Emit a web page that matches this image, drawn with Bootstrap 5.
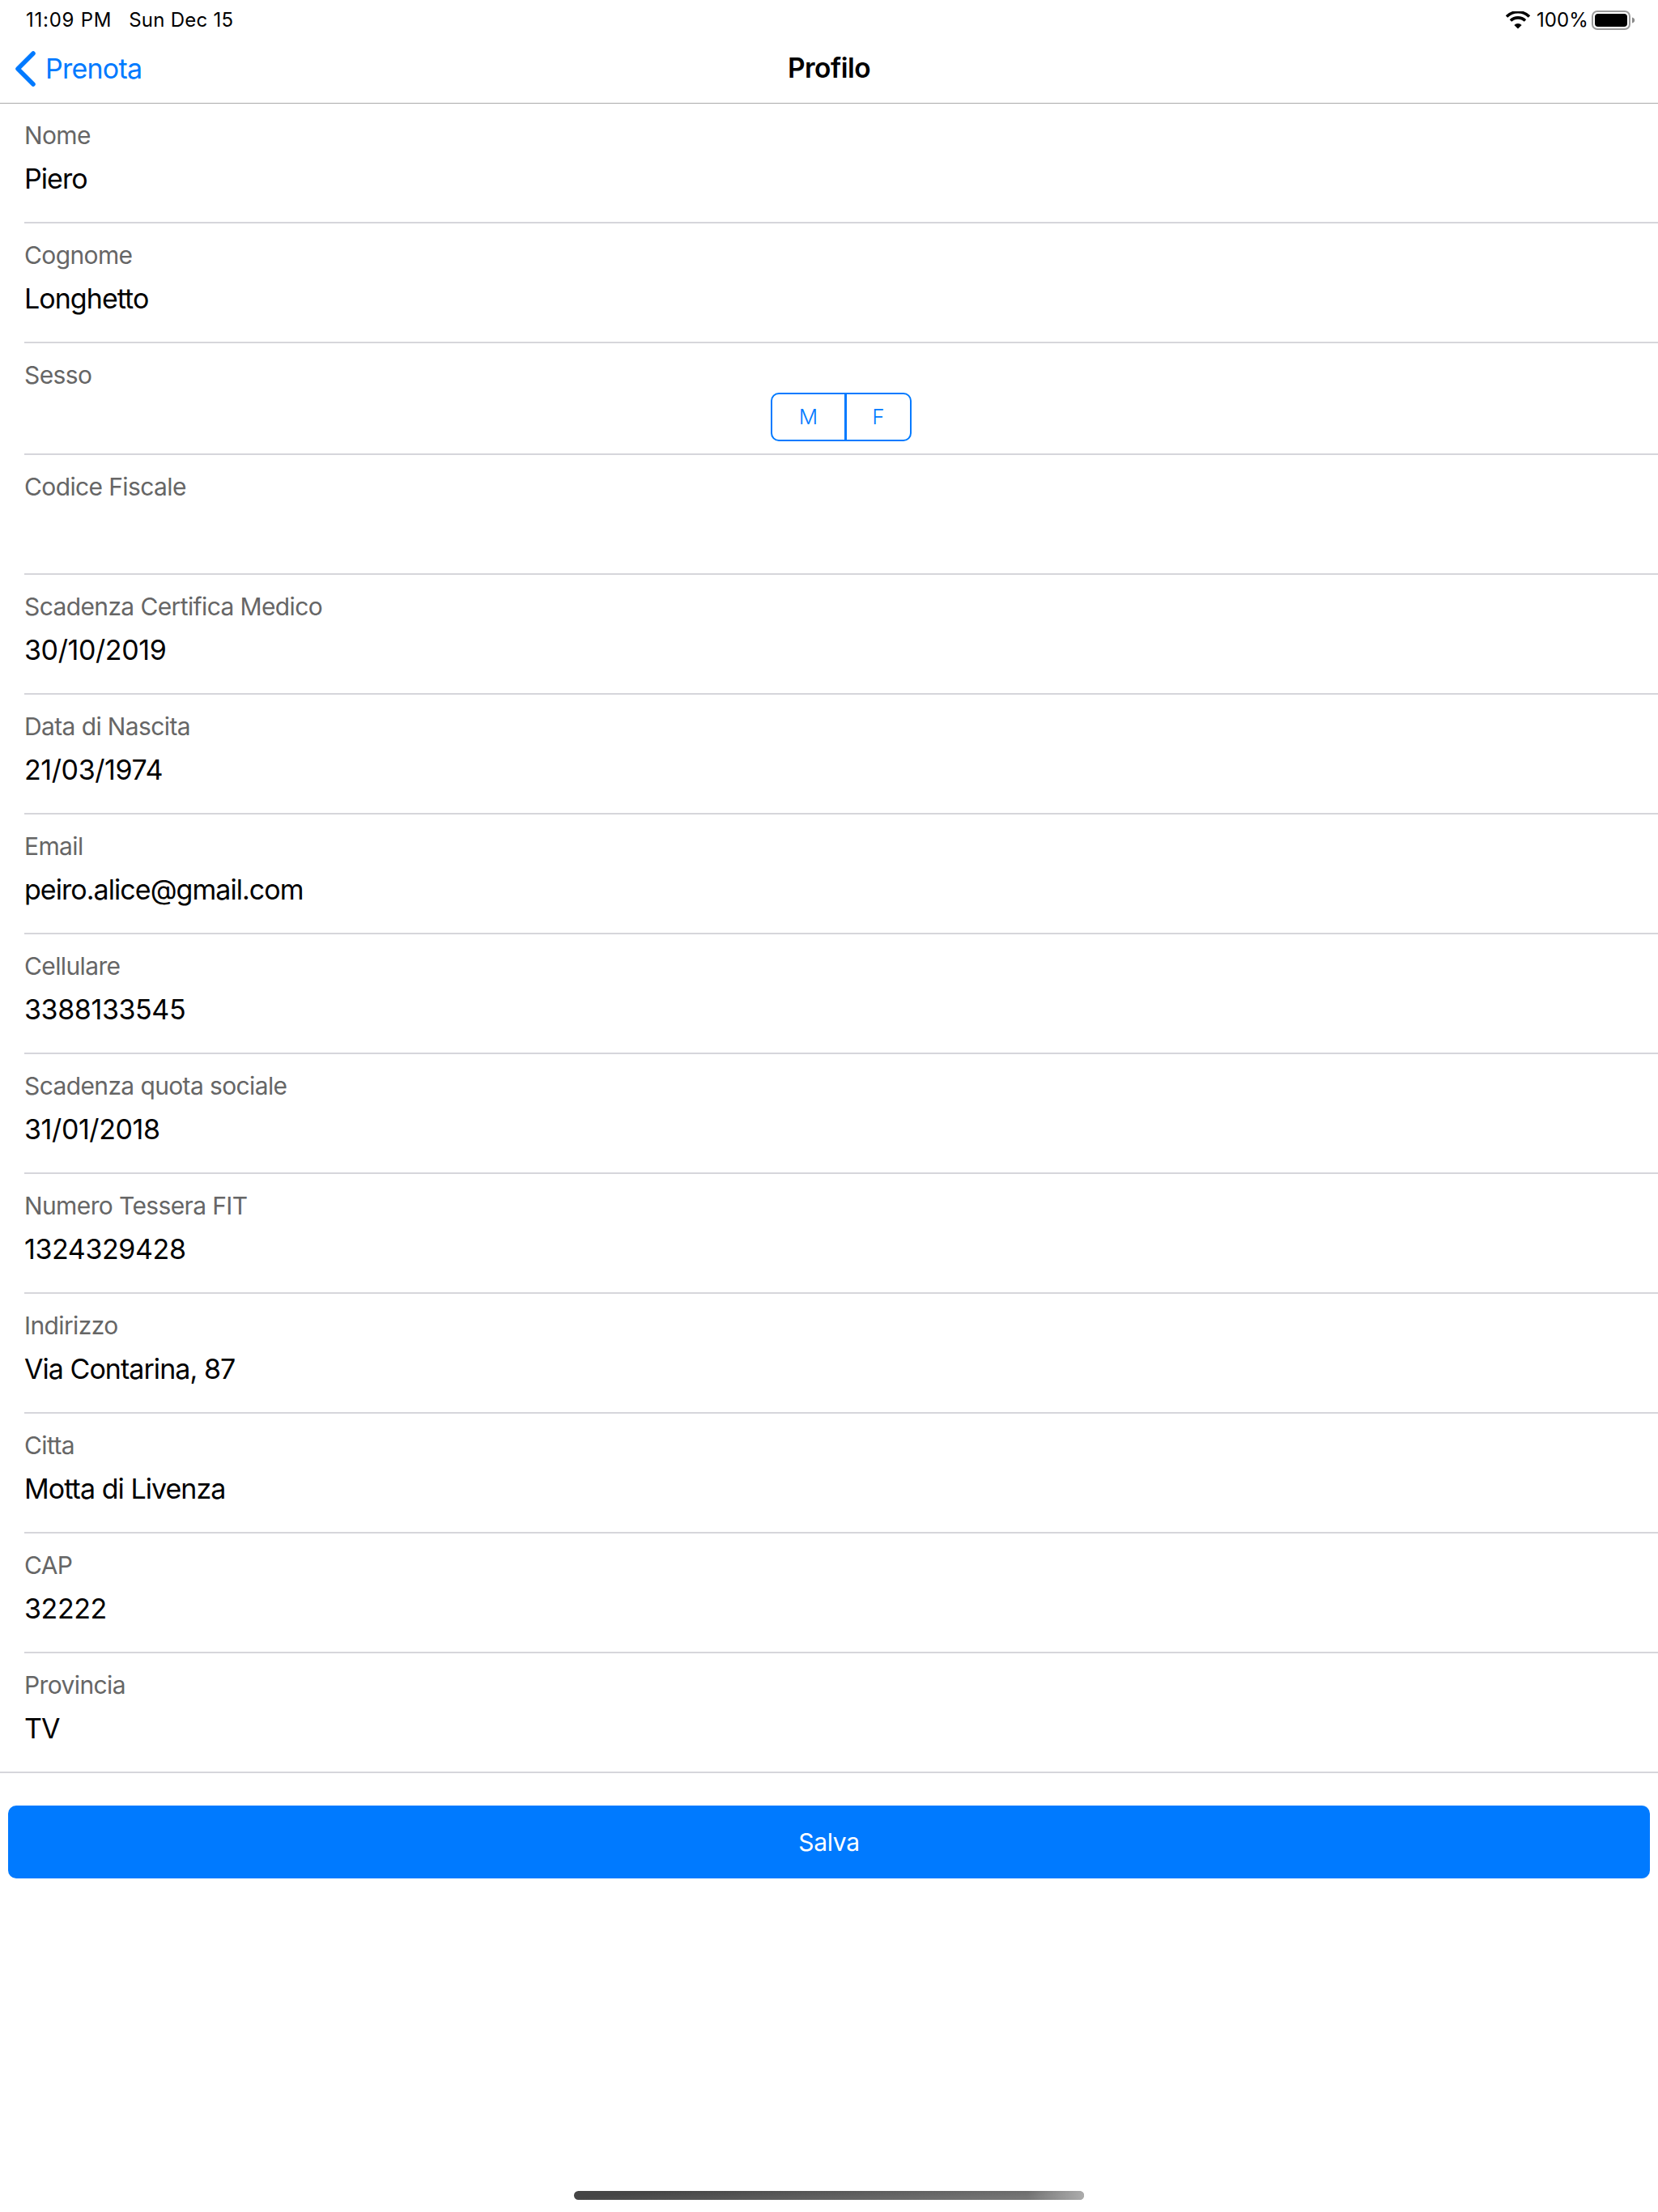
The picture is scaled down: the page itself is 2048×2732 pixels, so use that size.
<!DOCTYPE html>
<html lang="it">
<head>
<meta charset="utf-8">
<title>Profilo</title>
<link href="https://cdn.jsdelivr.net/npm/bootstrap@5.3.0/dist/css/bootstrap.min.css" rel="stylesheet">
<style>
body{font-family:Inter,"Liberation Sans",sans-serif;background:#fff;color:#000;}
.page-wrap{min-height:2732px;}
.status-bar{height:50px;padding:0 28px 0 32px;font-size:24px;line-height:48px;}
.status-time{letter-spacing:.75px;}
.status-date{margin-left:21px;letter-spacing:.25px;}
.status-pct{letter-spacing:.1px;}
.wifi-ico{width:30px;height:22px;margin-right:8px;}
.batt-ico{width:54px;height:24px;margin-left:4px;}
.nav-head{height:78px;border-bottom:1px solid #aaa;padding:0 0 8px 18px;}
.back-link{color:#007aff;font-size:34px;letter-spacing:-.75px;text-decoration:none;gap:12px;}
.back-link svg{width:26px;height:44px;}
.head-title{font-size:33.5px;font-weight:600;letter-spacing:-.5px;left:0;right:0;top:9px;text-align:center;pointer-events:none;}
.field-row{height:148px;padding-left:30px;}
.field-inner{height:148px;border-bottom:2px solid #d6d6db;padding-top:21px;}
.field-row.short-row,.field-row.short-row .field-inner{height:138px;}
.field-row.last-row{padding-left:0;}
.field-row.last-row .field-inner{padding-left:30px;}
.field-label{font-size:30px;line-height:36px;color:#666;letter-spacing:-.62px;}
.field-value{font-size:34px;line-height:42px;margin-top:15px;min-height:42px;letter-spacing:-.95px;}
.field-value.num-value{letter-spacing:-.4px;}
.seg-wrap{margin-left:922px;margin-top:4px;}
.seg-wrap .btn{border:2px solid #007aff;color:#007aff;background:#fff;font-size:26px;font-weight:300;line-height:1;height:60px;padding:0;border-radius:10px;display:flex;align-items:center;justify-content:center;}
.seg-wrap .btn:first-child{width:93px;}
.seg-wrap .btn:last-child{width:82px;margin-left:-2px;}
.save-btn{background:#007aff;border:0;color:#fff;height:90px;font-size:30px;border-radius:10px;margin:40px 10px 0;letter-spacing:-.3px;}
.save-btn:hover{background:#007aff;color:#fff;}
.home-bar{width:630px;height:11px;border-radius:6px;background:linear-gradient(176deg,#454545 15%,#767676 85%);margin:auto auto 15px;overflow:hidden;}
.home-bar::after{content:"";display:block;height:100%;width:70px;margin-left:auto;background:linear-gradient(90deg,rgba(190,190,190,0),rgba(190,190,190,.75));}
</style>
</head>
<body>
<div class="page-wrap d-flex flex-column">
  <div class="status-bar d-flex align-items-center justify-content-between">
    <div><span class="status-time">11:09 PM</span><span class="status-date">Sun Dec 15</span></div>
    <div class="d-flex align-items-center">
      <svg class="wifi-ico" viewBox="0 0 30 22"><path d="M1 6.500a20 20 0 0 1 28 0" fill="none" stroke="#000" stroke-width="3.600"/><path d="M6 11.500a13 13 0 0 1 18 0" fill="none" stroke="#000" stroke-width="3.600"/><path d="M15 21.500l-4.600-4.600a6.600 6.600 0 0 1 9.200 0z" fill="#000"/></svg>
      <span class="status-pct">100%</span>
      <svg class="batt-ico" viewBox="0 0 54 24"><rect x="1" y="1" width="46" height="22" rx="6" fill="none" stroke="#9a9a9a" stroke-width="2"/><rect x="4" y="4" width="40" height="16" rx="4" fill="#000"/><path d="M50 8.500c2 .5 3.200 1.800 3.200 3.500s-1.200 3-3.200 3.500z" fill="#8a8a8a"/></svg>
    </div>
  </div>
  <div class="nav-head d-flex align-items-center position-relative">
    <a class="back-link d-flex align-items-center" href="#">
      <svg viewBox="0 0 26 44"><path d="M23 3L4 22l19 19" fill="none" stroke="#007aff" stroke-width="5.500" stroke-linecap="round" stroke-linejoin="round"/></svg>
      <span>Prenota</span>
    </a>
    <div class="head-title position-absolute">Profilo</div>
  </div>

  <div class="field-row"><div class="field-inner"><div class="field-label">Nome</div><div class="field-value">Piero</div></div></div>
  <div class="field-row"><div class="field-inner"><div class="field-label">Cognome</div><div class="field-value">Longhetto</div></div></div>
  <div class="field-row short-row"><div class="field-inner"><div class="field-label">Sesso</div>
    <div class="seg-wrap btn-group" role="group"><button type="button" class="btn">M</button><button type="button" class="btn">F</button></div></div></div>
  <div class="field-row"><div class="field-inner"><div class="field-label">Codice Fiscale</div><div class="field-value"></div></div></div>
  <div class="field-row"><div class="field-inner"><div class="field-label">Scadenza Certifica Medico</div><div class="field-value num-value">30/10/2019</div></div></div>
  <div class="field-row"><div class="field-inner"><div class="field-label">Data di Nascita</div><div class="field-value num-value">21/03/1974</div></div></div>
  <div class="field-row"><div class="field-inner"><div class="field-label">Email</div><div class="field-value">peiro.alice@gmail.com</div></div></div>
  <div class="field-row"><div class="field-inner"><div class="field-label">Cellulare</div><div class="field-value num-value">3388133545</div></div></div>
  <div class="field-row"><div class="field-inner"><div class="field-label">Scadenza quota sociale</div><div class="field-value num-value">31/01/2018</div></div></div>
  <div class="field-row"><div class="field-inner"><div class="field-label">Numero Tessera FIT</div><div class="field-value num-value">1324329428</div></div></div>
  <div class="field-row"><div class="field-inner"><div class="field-label">Indirizzo</div><div class="field-value">Via Contarina, 87</div></div></div>
  <div class="field-row"><div class="field-inner"><div class="field-label">Citta</div><div class="field-value">Motta di Livenza</div></div></div>
  <div class="field-row"><div class="field-inner"><div class="field-label">CAP</div><div class="field-value num-value">32222</div></div></div>
  <div class="field-row last-row"><div class="field-inner"><div class="field-label">Provincia</div><div class="field-value">TV</div></div></div>

  <button type="button" class="btn save-btn">Salva</button>
  <div class="home-bar"></div>
</div>
<script src="https://cdn.jsdelivr.net/npm/bootstrap@5.3.0/dist/js/bootstrap.bundle.min.js"></script>
</body>
</html>
